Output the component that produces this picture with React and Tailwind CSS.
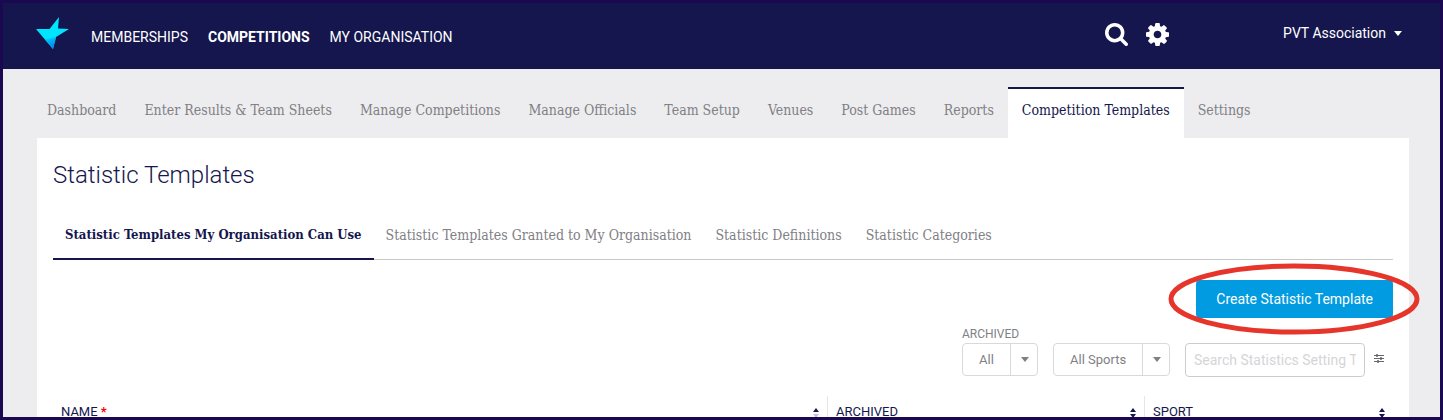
const slab = "font-['Roboto_Slab','DejaVu_Serif_Condensed','DejaVu_Serif',serif]"

const mainNav = ['Memberships', 'Competitions', 'My Organisation']

const tabs = [
  'Dashboard',
  'Enter Results & Team Sheets',
  'Manage Competitions',
  'Manage Officials',
  'Team Setup',
  'Venues',
  'Post Games',
  'Reports',
  'Competition Templates',
  'Settings',
]

const subTabs = [
  'Statistic Templates My Organisation Can Use',
  'Statistic Templates Granted to My Organisation',
  'Statistic Definitions',
  'Statistic Categories',
]

function Logo() {
  return (
    <svg viewBox="0 0 33 32" className="w-[33px] h-8" aria-hidden="true">
      <defs>
        <linearGradient id="logo-tip" x1="0" y1="0" x2="0.4" y2="1">
          <stop offset="0.1" stopColor="#00d4ff" />
          <stop offset="0.8" stopColor="#0094f0" />
        </linearGradient>
      </defs>
      <path d="M23 0L22 11.5L33 12L20 20L17 32L0 12L13.5 12Z" fill="#00e5ff" />
      <path d="M20 20L17 32L9 22.6Z" fill="url(#logo-tip)" />
    </svg>
  )
}

function SearchIcon() {
  return (
    <svg viewBox="64 128 1664 1664" className="size-[23px]" fill="currentColor" aria-hidden="true">
      <path d="M1216 832q0-185-131.5-316.5t-316.5-131.5-316.5 131.5-131.5 316.5 131.5 316.5 316.5 131.5 316.5-131.5 131.5-316.5zm512 832q0 52-38 90t-90 38q-54 0-90-38l-343-342q-179 124-399 124-143 0-273.5-55.5t-225-150-150-225-55.5-273.5 55.5-273.5 150-225 225-150 273.5-55.5 273.5 55.5 225 150 150 225 55.5 273.5q0 220-124 399l343 343q37 37 37 90z" />
    </svg>
  )
}

function CogIcon() {
  return (
    <svg viewBox="128 128 1536 1536" className="size-[23px]" fill="currentColor" aria-hidden="true">
      <path d="M1152 896q0-106-75-181t-181-75-181 75-75 181 75 181 181 75 181-75 75-181zm512-109v222q0 12-8 23t-20 13l-185 28q-19 54-39 91 35 50 107 138 10 12 10 25t-9 23q-27 37-99 108t-94 71q-12 0-26-9l-138-108q-44 23-91 38-16 136-29 186-7 28-36 28h-222q-14 0-24.5-8.5t-11.5-21.5l-28-184q-49-16-90-37l-141 107q-10 9-25 9-14 0-25-11-126-114-165-168-7-10-7-23 0-12 8-23 15-21 51-66.5t54-70.5q-27-50-41-99l-183-27q-13-2-21-12.5t-8-23.5v-222q0-12 8-23t19-13l186-28q14-46 39-92-40-57-107-138-10-12-10-24 0-10 9-23 26-36 98.5-107.5t94.5-71.5q13 0 26 10l138 107q44-23 91-38 16-136 29-186 7-28 36-28h222q14 0 24.5 8.5t11.5 21.5l28 184q49 16 90 37l142-107q9-9 24-9 13 0 25 10 129 119 165 170 7 8 7 22 0 12-8 23-15 21-51 66.5t-54 70.5q26 50 41 98l183 28q13 2 21 12.5t8 23.5z" />
    </svg>
  )
}

function Caret({ className }) {
  return (
    <svg viewBox="0 0 8 5" preserveAspectRatio="none" className={className} aria-hidden="true">
      <path d="M0 0H8L4 5Z" fill="currentColor" />
    </svg>
  )
}

function Sliders() {
  return (
    <svg viewBox="0 0 10 9" className="w-[10px] h-[9px]" stroke="currentColor" fill="none" aria-hidden="true">
      <path d="M0 1.5H10M0 4.5H10M0 7.5H10" />
      <path d="M3 0V3M7 3V6M4 6V9" strokeWidth="1.5" />
    </svg>
  )
}

function SortArrows({ sorted }) {
  return (
    <svg viewBox="0 0 6 10" className="w-[6px] h-[10px] mt-0.5" fill="currentColor" aria-hidden="true">
      <path d="M0 4L3 0L6 4Z" />
      <path d="M0 6H6L3 10Z" opacity={sorted ? 0.25 : 1} />
    </svg>
  )
}

function Header() {
  return (
    <header className="h-[66px] flex-shrink-0 bg-[#14164d] text-white text-sm flex items-center pl-[33px] pr-[38px]">
      <a href="#home" aria-label="Home" className="pb-1.5">
        <Logo />
      </a>
      <nav className="flex gap-5 ml-[22px] pt-0.5 uppercase">
        {mainNav.map((item) => (
          <a key={item} href="#nav" className={item === 'Competitions' ? 'font-bold' : ''}>
            {item}
          </a>
        ))}
      </nav>
      <div className="ml-auto flex items-center pb-1.5">
        <button type="button" aria-label="Search" className="pt-0.5">
          <SearchIcon />
        </button>
        <button type="button" aria-label="Settings" className="ml-[18px] pt-0.5">
          <CogIcon />
        </button>
        <button type="button" className="ml-[114px] flex items-center gap-2">
          PVT Association
          <Caret className="w-2 h-[5px]" />
        </button>
      </div>
    </header>
  )
}

function Filter({ id, label, value, className }) {
  return (
    <div className={`relative mb-px ${className}`}>
      <select
        id={id}
        aria-label={label}
        className="appearance-none block w-full h-[33px] pl-4 pr-7 rounded border border-[#d9d9d9] bg-white text-[13px] text-[#7f7f86]"
      >
        <option>{value}</option>
      </select>
      <span className="absolute right-0 inset-y-px w-7 border-l border-[#d9d9d9] flex items-center justify-center pointer-events-none text-[#7f7f86]">
        <Caret className="w-2 h-[5px]" />
      </span>
    </div>
  )
}

function SortHeading({ children, className, sorted }) {
  return (
    <th className={`p-0 font-normal text-left ${className}`}>
      <div className={`h-8 px-2 flex items-center justify-between ${sorted ? '' : 'border-l border-[#e6e6e6]'}`}>
        <span>{children}</span>
        <SortArrows sorted={sorted} />
      </div>
    </th>
  )
}

export default function App() {
  return (
    <div className="h-screen overflow-hidden flex flex-col border-3 border-[#1a0850] bg-[#ededef] font-[Roboto,sans-serif] text-[#14164d]">
      <Header />
      <nav className={`flex mx-[30px] mt-[18px] flex-shrink-0 text-sm text-[#808085] ${slab}`}>
        {tabs.map((tab) => (
          <a
            key={tab}
            href="#tab"
            className={`h-[51px] px-[14px] flex items-center whitespace-nowrap border-t-2 pb-2 ${
              tab === 'Competition Templates' ? 'bg-white border-[#14164d] text-[#14164d]' : 'border-transparent'
            }`}
          >
            {tab}
          </a>
        ))}
      </nav>
      <main className="mr-[31px] ml-[34px] flex-1 bg-white px-4 pt-[21px]">
        <h1 className="text-2xl leading-8 font-light">Statistic Templates</h1>
        <nav className={`flex mt-5 border-b border-[#c8c8c8] text-sm text-[#808085] ${slab}`}>
          {subTabs.map((tab, i) => (
            <a
              key={tab}
              href="#subtab"
              className={`h-[49px] px-3 -mb-px flex items-center whitespace-nowrap border-b-2 ${
                i === 0 ? 'text-[13px] pt-0.5 font-bold border-[#14164d] text-[#14164d]' : 'border-transparent'
              }`}
            >
              {tab}
            </a>
          ))}
        </nav>
        <div className="flex justify-end mt-5">
          <div className="relative">
            <button type="button" className="block h-[38px] px-5 rounded-sm bg-[#009be1] text-white text-sm">
              Create Statistic Template
            </button>
            <svg
              viewBox="0 0 252 72"
              className="absolute -left-7 -top-[17px] w-[252px] h-[72px] pointer-events-none"
              aria-hidden="true"
            >
              <ellipse cx="126" cy="36" rx="123" ry="33" fill="none" stroke="#e6352b" strokeWidth="5" />
            </svg>
          </div>
        </div>
        <div className="flex justify-end items-end mt-2 pr-[9px]">
          <div className="mr-[15px]">
            <label htmlFor="archived" className="block text-xs leading-[17px] text-[#7f7f86]">
              ARCHIVED
            </label>
            <Filter id="archived" value="All" className="w-[76px]" />
          </div>
          <Filter id="sport" label="Sport" value="All Sports" className="w-[117px] mr-[15px]" />
          <input
            type="text"
            aria-label="Search"
            placeholder="Search Statistics Setting Templates"
            className="w-[180px] h-[34px] px-2 rounded border border-[#cccccc] text-sm placeholder:text-[#d5d5d8]"
          />
          <button type="button" aria-label="Filter options" className="ml-[9px] mb-[14px] text-[#66666c]">
            <Sliders />
          </button>
        </div>
        <table className="w-full mt-[19px] table-fixed text-[13px]">
          <thead>
            <tr>
              <SortHeading sorted className="w-auto">
                NAME <span className="text-[#ff0000] font-bold">*</span>
              </SortHeading>
              <SortHeading className="w-[317px]">ARCHIVED</SortHeading>
              <SortHeading className="w-[249px]">SPORT</SortHeading>
            </tr>
          </thead>
        </table>
      </main>
    </div>
  )
}
